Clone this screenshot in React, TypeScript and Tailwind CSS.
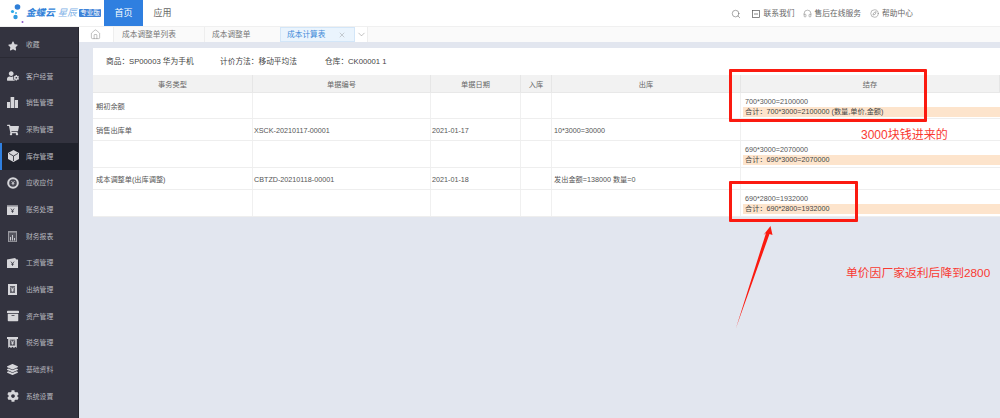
import React from 'react';
import { Search, Headphones, Compass, Home, X, ChevronDown } from 'lucide-react';
import { FaStar, FaUserCog, FaShoppingCart, FaLayerGroup, FaCog, FaArchive } from 'react-icons/fa';

const font = "font-['Liberation_Sans','Noto_Sans_CJK_SC',sans-serif]";

const yen = 'M-1.6 -2 L0 0 L1.6 -2 M0 0 V2.2 M-1.4 0.6 H1.4';

// yen mark, dark on the light icon body
const Yen = ({ x, y, c = '#33333f' }: { x: number; y: number; c?: string }) => (
  <path d={yen} transform={`translate(${x} ${y})`} fill="none" stroke={c} strokeWidth="0.8" />
);

const Bars = () => (
  <svg width="11" height="11" viewBox="0 0 11 11" fill="currentColor">
    <rect x="0" y="5" width="3" height="6" />
    <rect x="3.6" y="0" width="3.6" height="11" />
    <rect x="7.8" y="3" width="3.2" height="8" />
  </svg>
);

const Cube = () => (
  <svg width="11" height="12" viewBox="0 0 11 12">
    <polygon points="5.5,0 11,3 11,9 5.5,12 0,9 0,3" fill="currentColor" />
    <path d="M1 3.4 L5.5 6 L10 3.4 M5.5 6 V11" fill="none" stroke="#20222c" strokeWidth="0.8" />
  </svg>
);

const Coin = () => (
  <svg width="12" height="12" viewBox="0 0 12 12">
    <circle cx="6" cy="6" r="5.8" fill="currentColor" />
    <circle cx="6" cy="6" r="3.8" fill="#44444f" />
    <Yen x={6} y={6} c="#d6d6da" />
  </svg>
);

const Ledger = () => (
  <svg width="11" height="10" viewBox="0 0 11 10">
    <rect width="11" height="10" fill="currentColor" />
    <rect width="11" height="1.6" fill="#8b8b93" />
    <Yen x={5.5} y={5.6} />
  </svg>
);

const Report = () => (
  <svg width="9" height="11" viewBox="0 0 9 11">
    <rect width="9" height="11" fill="#9a9aa1" />
    <rect x="1" y="1.6" width="7" height="8.6" fill="#55555f" />
    <path d="M2.5 9.5 V6 M4.5 9.5 V4 M6.5 9.5 V7" stroke="#d6d6da" strokeWidth="0.9" />
  </svg>
);

const Wages = () => (
  <svg width="11" height="10" viewBox="0 0 11 10">
    <polygon points="0,1.5 8,0 9.5,1.5 11,1.5 11,10 0,10" fill="currentColor" />
    <Yen x={5.5} y={5.6} />
  </svg>
);

const Cashier = () => (
  <svg width="9" height="11" viewBox="0 0 9 11">
    <rect width="9" height="11" fill="currentColor" />
    <rect x="2" y="2" width="5" height="7" fill="#66666f" />
    <Yen x={4.5} y={5.4} c="#e6e6ea" />
  </svg>
);

const Tax = () => (
  <svg width="11" height="11" viewBox="0 0 11 11">
    <rect width="11" height="2" fill="currentColor" />
    <polygon points="1.2,2 9.8,2 9.8,11 8.4,9.8 7,11 5.5,9.8 4,11 2.6,9.8 1.2,11" fill="currentColor" />
    <rect x="2.8" y="2.6" width="5.4" height="6" fill="#55555f" />
    <Yen x={5.5} y={5.4} c="#e6e6ea" />
  </svg>
);

const menu: { name: string; icon: React.ReactNode; active?: boolean }[] = [
  { name: '客户经营', icon: <FaUserCog size={12} /> },
  { name: '销售管理', icon: <Bars /> },
  { name: '采购管理', icon: <FaShoppingCart size={12} /> },
  { name: '库存管理', icon: <Cube />, active: true },
  { name: '应收应付', icon: <Coin /> },
  { name: '账务处理', icon: <Ledger /> },
  { name: '财务报表', icon: <Report /> },
  { name: '工资管理', icon: <Wages /> },
  { name: '出纳管理', icon: <Cashier /> },
  { name: '资产管理', icon: <FaArchive size={12} /> },
  { name: '税务管理', icon: <Tax /> },
  { name: '基础资料', icon: <FaLayerGroup size={11} /> },
  { name: '系统设置', icon: <FaCog size={12} /> },
];

const rows = [
  { h: 'h-[26px]', pb: 'pb-[1px]', type: '期初余额', no: '', date: '', out: '', line: '700*3000=2100000', sum: '合计：700*3000=2100000 (数量,单价,金额)' },
  { h: 'h-[22px]', pb: '', type: '销售出库单', no: 'XSCK-20210117-00001', date: '2021-01-17', out: '10*3000=30000', line: '', sum: '' },
  { h: 'h-[27px]', pb: 'pb-[2px]', type: '', no: '', date: '', out: '', line: '690*3000=2070000', sum: '合计：690*3000=2070000' },
  { h: 'h-[22px]', pb: '', type: '成本调整单(出库调整)', no: 'CBTZD-20210118-00001', date: '2021-01-18', out: '发出金额=138000 数量=0', line: '', sum: '' },
  { h: 'h-[27px]', pb: 'pb-[2px]', type: '', no: '', date: '', out: '', line: '690*2800=1932000', sum: '合计：690*2800=1932000' },
];

const grid = 'grid grid-cols-[160px_178px_90px_31px_189px_1fr]';

export default function App() {
  return (
    <div className={`relative flex h-[418px] w-[1000px] flex-col overflow-hidden bg-[#e2e6ef] ${font}`}>
      {/* Top bar */}
      <div className="flex h-[27px] shrink-0 items-stretch border-b border-[#f0f0f0] bg-white">
        <div className="flex w-[104px] items-center pl-[10px]">
          <svg width="16" height="24" viewBox="0 0 16 24" className="shrink-0">
            <circle cx="7.5" cy="6" r="2.8" fill="#2f7fd8" />
            <circle cx="2.5" cy="10.5" r="1.6" fill="#29a9e8" />
            <circle cx="6" cy="12" r="1" fill="#3fb6e8" />
            <circle cx="5.5" cy="16" r="2.2" fill="#2f9be0" />
            <circle cx="12.5" cy="21" r="1" fill="#8a5cc8" />
          </svg>
          <span className="whitespace-nowrap text-[9.6px] font-bold italic leading-none text-[#2f7fd8]">金蝶云</span>
          <span className="ml-[3px] whitespace-nowrap text-[9.5px] italic leading-none text-[#7fb2e6]">星辰</span>
          <span className="ml-[2px] whitespace-nowrap rounded-[1px] bg-[#3f83d8] px-[1.5px] text-[6.5px] leading-[8px] text-white">专业版</span>
        </div>
        <div className="flex w-[39px] items-center justify-center bg-[#2f7fe0] pt-[1px] text-[9px] text-white">首页</div>
        <div className="flex w-[39px] items-center justify-center pt-[1px] text-[9px] text-[#666]">应用</div>
        <div className="ml-auto flex items-center pr-[87px] pt-[1px] text-[7.75px] text-[#666]">
          <Search size={10} strokeWidth={1.2} className="text-[#555]" />
          <svg width="8" height="8" viewBox="0 0 8 8" fill="none" stroke="#555" strokeWidth="0.7" className="ml-[11px]">
            <rect x="0.5" y="0.5" width="7" height="7" />
            <path d="M2 4 H6" />
          </svg>
          <span className="ml-[3px]">联系我们</span>
          <Headphones size={9} strokeWidth={1.2} className="ml-[9px]" />
          <span className="ml-[2px]">售后在线服务</span>
          <Compass size={9} strokeWidth={1.2} className="ml-[9px]" />
          <span className="ml-[3px]">帮助中心</span>
        </div>
      </div>

      <div className="flex min-h-0 flex-1">
        {/* Sidebar */}
        <div className="flex w-[79px] shrink-0 flex-col border-r border-[#26262e] bg-[#33333f] text-[6.8px] text-[#b9b9bf]">
          <div className="flex h-[31px] items-center border-b border-[#2a2a34] pt-[7px]">
            <span className="mr-[1px] flex w-[25px] justify-center text-[#d6d6da]"><FaStar size={10} /></span>
            <span>收藏</span>
          </div>
          <div className="pt-[5px]">
            {menu.map((m) => (
              <div
                key={m.name}
                className={`flex h-[26.66px] items-center ${m.active ? 'border-l-2 border-[#2f7fe0] bg-[#20222c]' : ''}`}
              >
                <span className={`mr-[1px] flex justify-center text-[#d6d6da] ${m.active ? 'w-[23px]' : 'w-[25px]'}`}>{m.icon}</span>
                <span className="pt-[1px]">{m.name}</span>
              </div>
            ))}
          </div>
        </div>

        <div className="min-w-0 flex-1">
          {/* Tabs */}
          <div className="flex h-[15px] items-stretch bg-[#fafafa] text-[7.7px] text-[#777]">
            <div className="flex w-[35px] items-center justify-center border-r border-[#eee] bg-white pr-[1px]">
              <Home size={11} strokeWidth={1} />
            </div>
            <div className="flex w-[91px] items-center border-r border-[#eee] pl-[8px]">成本调整单列表</div>
            <div className="flex w-[75px] items-center pl-[7px]">成本调整单</div>
            <div className="flex w-[75px] items-center justify-between border border-[#d3e6f8] bg-[#eaf4fd] pl-[6px] pr-[8px] text-[#3f8ad8]">
              成本计算表
              <X size={8} strokeWidth={1} className="text-[#777]" />
            </div>
            <div className="flex w-[13px] items-center justify-center border-r border-[#eee] bg-white">
              <ChevronDown size={11} strokeWidth={1} />
            </div>
          </div>

          {/* Content */}
          <div className="ml-[14px] mt-[6px] bg-white text-[7.2px] text-[#555]">
            <div className="flex h-[27px] items-center pl-[13px] pt-[1px] text-[7.7px] text-[#444]">
              <span className="w-[114px]">商品：SP00003 华为手机</span>
              <span className="w-[105px]">计价方法：移动平均法</span>
              <span>仓库：CK00001 1</span>
            </div>
            <div className={`${grid} h-[18px] border-b border-[#e8e8e8] bg-[#f2f2f2] text-[#666]`}>
              {['事务类型', '单据编号', '单据日期', '入库', '出库', '结存'].map((t) => (
                <div key={t} className="flex items-center justify-center border-r border-[#e6e6e6] pt-[3px]">{t}</div>
              ))}
            </div>
            {rows.map((r, i) => (
              <div key={i} className={`${grid} ${r.h} border-b border-[#eee]`}>
                <div className="flex items-center border-r border-[#f0f0f0] pl-[3px] pt-[3px]">{r.type}</div>
                <div className="flex items-center border-r border-[#f0f0f0] pl-[1px] pt-[3px]">{r.no}</div>
                <div className="flex items-center border-r border-[#f0f0f0] pl-[1px] pt-[3px]">{r.date}</div>
                <div className="border-r border-[#f0f0f0]" />
                <div className="flex items-center border-r border-[#f0f0f0] pl-[2px] pt-[3px]">{r.out}</div>
                <div className={`flex flex-col justify-end ${r.pb}`}>
                  {r.line && <div className="pl-[4px] leading-[11px]">{r.line}</div>}
                  {r.sum && <div className="ml-[2px] h-[10px] bg-[#fde4cc] pl-[2px] leading-[10px] text-[#444]">{r.sum}</div>}
                </div>
              </div>
            ))}
          </div>
        </div>
      </div>

      {/* Annotations drawn over the screenshot */}
      <div className="absolute left-[729px] top-[69px] h-[53px] w-[198px] rounded-[1px] border-[3px] border-[#fb1a10]" />
      <div className="absolute left-[729px] top-[181px] h-[41px] w-[129px] rounded-[1px] border-[3px] border-[#fb1a10]" />
      <div className="absolute left-[861px] top-[127px] whitespace-nowrap text-[12px] leading-[16px] text-[#f93a32]">3000块钱进来的</div>
      <div className="absolute left-[846px] top-[265px] whitespace-nowrap text-[11.8px] leading-[16px] text-[#f93a32]">单价因厂家返利后降到2800</div>
      <svg className="absolute left-[730px] top-[220px]" width="50" height="112" viewBox="730 220 50 112">
        <polygon points="770.5,226 772.5,235 769.5,234 736,328 766,233 763.5,235" fill="#fb1a10" />
      </svg>
    </div>
  );
}
